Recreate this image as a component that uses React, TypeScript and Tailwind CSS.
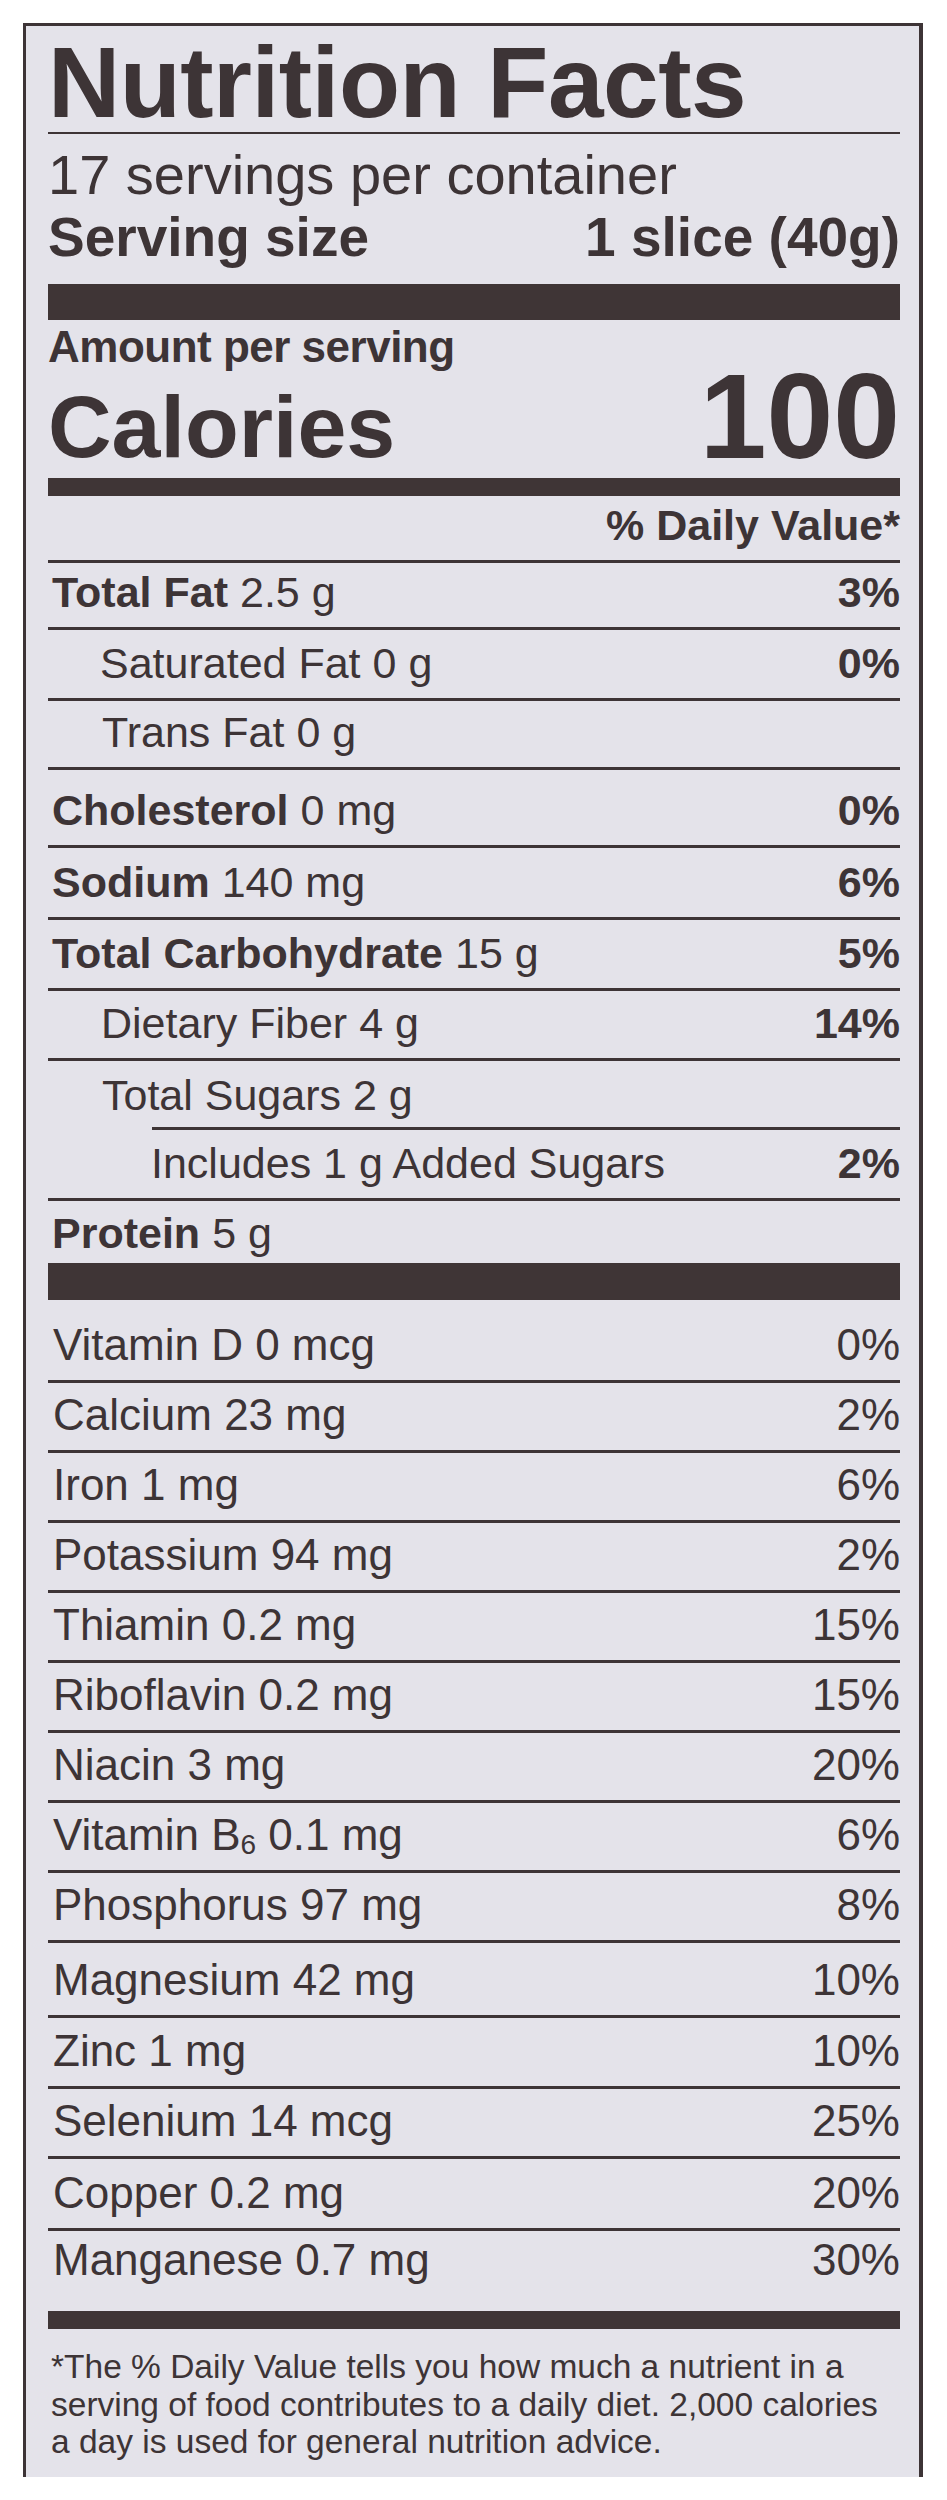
import React from "react";

type Item = {
  h: string;
  indent: string;
  name: string;
  amt: string;
  dv: string;
  bold?: boolean;
};

const TOP: Item[] = [
  { h: "h-[67px]", indent: "pl-[4px]", name: "Total Fat", amt: "2.5 g", dv: "3%", bold: true },
  { h: "h-[71px]", indent: "pl-[52px]", name: "Saturated Fat", amt: "0 g", dv: "0%" },
  { h: "h-[69px]", indent: "pl-[54px]", name: "Trans Fat", amt: "0 g", dv: "" },
  { h: "h-[78px]", indent: "pl-[4px]", name: "Cholesterol", amt: "0 mg", dv: "0%", bold: true },
  { h: "h-[72px]", indent: "pl-[4px]", name: "Sodium", amt: "140 mg", dv: "6%", bold: true },
  { h: "h-[71px]", indent: "pl-[4px]", name: "Total Carbohydrate", amt: "15 g", dv: "5%", bold: true },
  { h: "h-[70px]", indent: "pl-[53px]", name: "Dietary Fiber", amt: "4 g", dv: "14%" },
];

const VITAMINS: { h: string; name: React.ReactNode; dv: string; key: string }[] = [
  { key: "d", h: "h-[83px]", name: "Vitamin D 0 mcg", dv: "0%" },
  { key: "ca", h: "h-[70px]", name: "Calcium 23 mg", dv: "2%" },
  { key: "fe", h: "h-[70px]", name: "Iron 1 mg", dv: "6%" },
  { key: "k", h: "h-[70px]", name: "Potassium 94 mg", dv: "2%" },
  { key: "b1", h: "h-[70px]", name: "Thiamin 0.2 mg", dv: "15%" },
  { key: "b2", h: "h-[70px]", name: "Riboflavin 0.2 mg", dv: "15%" },
  { key: "b3", h: "h-[70px]", name: "Niacin 3 mg", dv: "20%" },
  {
    key: "b6",
    h: "h-[70px]",
    name: (
      <>
        Vitamin B<sub className="relative top-[4px] text-[28px] leading-none">6</sub> 0.1 mg
      </>
    ),
    dv: "6%",
  },
  { key: "p", h: "h-[70px]", name: "Phosphorus 97 mg", dv: "8%" },
  { key: "mg", h: "h-[75px]", name: "Magnesium 42 mg", dv: "10%" },
  { key: "zn", h: "h-[71px]", name: "Zinc 1 mg", dv: "10%" },
  { key: "se", h: "h-[70px]", name: "Selenium 14 mcg", dv: "25%" },
  { key: "cu", h: "h-[72px]", name: "Copper 0.2 mg", dv: "20%" },
];

const line = "border-b-[3px] border-[#3d3436]";

export default function App() {
  return (
    <div className="min-h-[2500px] bg-white pt-[23px] pl-[23px] font-['Liberation_Sans',Arial,sans-serif] text-[#3d3436]">
      <div className="flex w-[900px] flex-col border-t-[3px] border-l-[3px] border-r-[4px] border-[#3d3436] bg-[#e4e3ea] pl-[22px] pr-[19px]">
        {/* heading */}
        <div className="flex h-[108px] items-end border-b-2 border-[#3d3436]">
          <span className="text-[100px] font-bold leading-none tracking-[-0.5px]">Nutrition Facts</span>
        </div>
        <div className="flex h-[70px] items-end pb-[1px]">
          <span className="text-[56px] leading-none">17 servings per container</span>
        </div>
        <div className="flex h-[80px] items-end justify-between pb-[19px] text-[55px] font-bold leading-none">
          <span>Serving size</span>
          <span>1 slice (40g)</span>
        </div>
        <div className="h-[36px] bg-[#3f3536]" />

        {/* calories */}
        <div className="flex h-[55px] items-end pb-[6px]">
          <span className="text-[44px] font-bold leading-none tracking-[-0.5px]">Amount per serving</span>
        </div>
        <div className="flex h-[103px] items-end justify-between">
          <span className="pb-[7px] text-[88px] font-bold leading-none">Calories</span>
          <span className="pb-[2px] text-[120px] font-bold leading-none">100</span>
        </div>
        <div className="h-[18px] bg-[#3f3536]" />

        <div className={`flex h-[67px] items-end justify-end pb-[13px] ${line}`}>
          <span className="text-[43px] font-bold leading-none">% Daily Value*</span>
        </div>

        {TOP.map((r) => (
          <div
            key={r.name}
            className={`flex items-end justify-between pb-[13px] text-[43px] leading-none ${r.h} ${r.indent} ${line}`}
          >
            <span>
              {r.bold ? <span className="font-bold">{r.name}</span> : r.name}
              <span className="ml-[12px]">{r.amt}</span>
            </span>
            <span className="font-bold">{r.dv}</span>
          </div>
        ))}

        <div className="flex h-[66px] items-end pb-[10px] pl-[54px] text-[43px] leading-none">
          <span>Total Sugars 2 g</span>
        </div>
        <div className="ml-[104px] h-[3px] bg-[#3d3436]" />
        <div className={`flex h-[71px] items-end justify-between pb-[13px] pl-[103px] text-[43px] leading-none ${line}`}>
          <span>Includes 1 g Added Sugars</span>
          <span className="font-bold">2%</span>
        </div>
        <div className="flex h-[62px] items-end pb-[8px] pl-[4px] text-[43px] leading-none">
          <span className="font-bold">Protein</span>
          <span className="ml-[12px]">5 g</span>
        </div>
        <div className="h-[37px] bg-[#3f3536]" />

        {/* vitamins and minerals */}
        {VITAMINS.map((v) => (
          <div
            key={v.key}
            className={`flex items-end justify-between pb-[13px] pl-[5px] text-[44px] leading-none ${v.h} ${line}`}
          >
            <span>{v.name}</span>
            <span>{v.dv}</span>
          </div>
        ))}
        <div className="flex h-[80px] items-end justify-between pb-[29px] pl-[5px] text-[44px] leading-none">
          <span>Manganese 0.7 mg</span>
          <span>30%</span>
        </div>
        <div className="h-[18px] bg-[#3f3536]" />

        {/* footnote */}
        <div className="h-[148px] pt-[19px] pl-[3px] text-[33.5px] leading-[37.5px]">
          *The % Daily Value tells you how much a nutrient in a
          <br />
          serving of food contributes to a daily diet. 2,000 calories
          <br />a day is used for general nutrition advice.
        </div>
      </div>
    </div>
  );
}
